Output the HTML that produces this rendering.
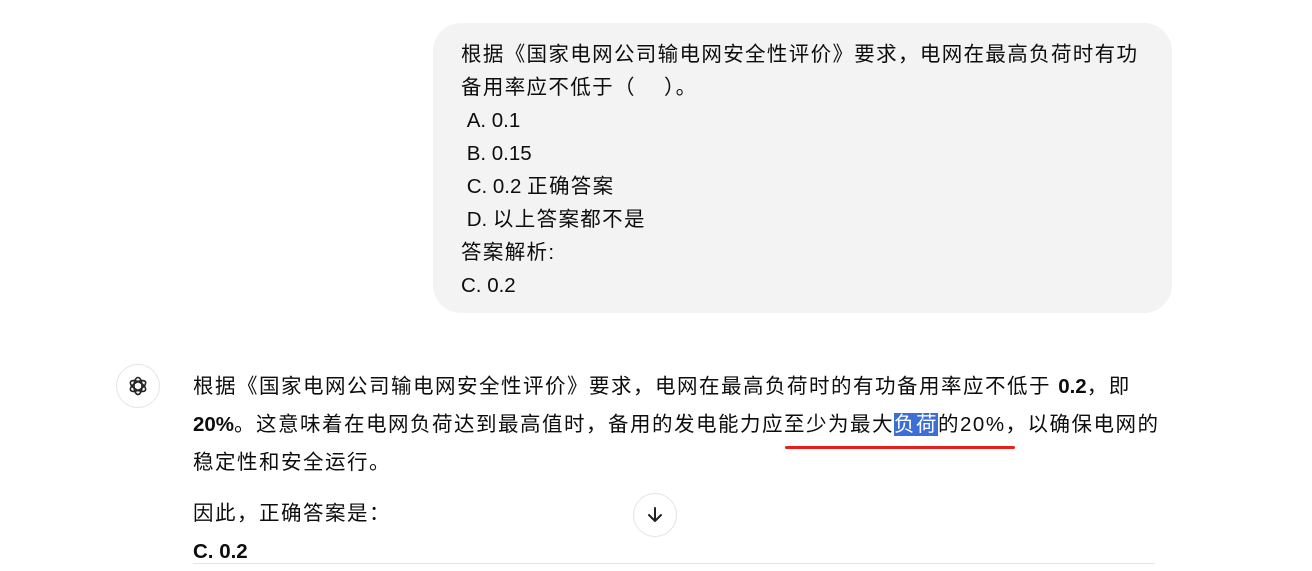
<!DOCTYPE html>
<html><head><meta charset="utf-8"><style>
body{margin:0;width:1312px;height:565px;background:#fff;overflow:hidden;position:relative;font-family:"Liberation Sans","Noto Sans CJK SC",sans-serif;color:#0d0d0d;}
.bubble{position:absolute;left:433px;top:23px;width:739px;height:290px;background:#f3f3f3;border-radius:28px;}
.q{position:absolute;left:461px;top:38px;font-size:20.5px;line-height:33px;white-space:nowrap;letter-spacing:1.35px;}
.a{position:absolute;left:193px;top:368px;font-size:20.5px;line-height:38px;white-space:nowrap;letter-spacing:1.5px;}
.n{letter-spacing:0px;}
.icon{position:absolute;left:116px;top:364px;width:44px;height:44px;border:1px solid #e5e5e5;border-radius:50%;box-sizing:border-box;display:flex;align-items:center;justify-content:center;}
.down{position:absolute;left:633px;top:493px;width:44px;height:44px;border:1px solid #e3e3e3;border-radius:50%;box-sizing:border-box;background:#fff;display:flex;align-items:center;justify-content:center;}
.hl{background:#3b6fd6;color:#fff;}
.red{position:absolute;left:785px;top:446px;width:230px;height:3px;background:#e8201d;border-radius:2px;}
.line{position:absolute;left:193px;top:563px;width:962px;height:1px;background:#e5e5e5;}
</style></head><body>
<div class="bubble"></div>
<div class="q">根据《国家电网公司输电网安全性评价》要求，电网在最高负荷时有功<br>备用率应不低于（&nbsp;&nbsp;&nbsp;&nbsp;）。<br><span class="n">&nbsp;A. 0.1<br>&nbsp;B. 0.15<br>&nbsp;C. 0.2 </span>正确答案<br><span class="n">&nbsp;D. </span>以上答案都不是<br>答案解析:<br><span class="n">C. 0.2</span></div>
<div class="icon"><svg width="24" height="24" viewBox="0 0 24 24" fill="none" stroke="#222" stroke-width="1.6"><g transform="translate(12 12)"><ellipse rx="4" ry="8.5" transform="rotate(0)"/><ellipse rx="4" ry="8.5" transform="rotate(60)"/><ellipse rx="4" ry="8.5" transform="rotate(120)"/></g></svg></div>
<div class="a">根据《国家电网公司输电网安全性评价》要求，电网在最高负荷时的有功备用率应不低于 <b class="n">0.2</b>，即<br><b class="n">20%</b>。这意味着在电网负荷达到最高值时，备用的发电能力应至少为最大<span class="hl">负荷</span>的20%，以确保电网的<br>稳定性和安全运行。<div style="height:13px"></div>因此，正确答案是：<br><b class="n">C. 0.2</b></div>
<div class="red"></div>
<div class="down"><svg width="20" height="20" viewBox="0 0 20 20" fill="none" stroke="#222" stroke-width="2" stroke-linecap="round" stroke-linejoin="round"><path d="M10 3v13M4 10l6 6 6-6"/></svg></div>
<div class="line"></div>
</body></html>
